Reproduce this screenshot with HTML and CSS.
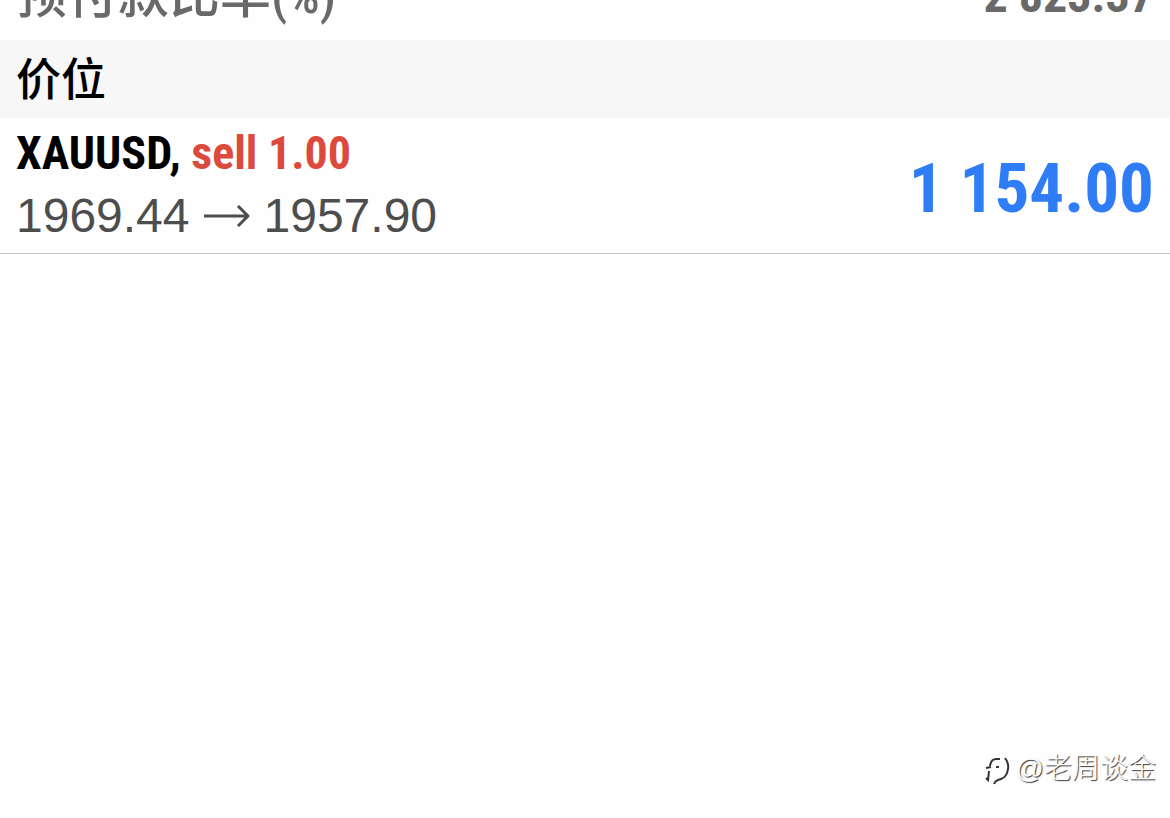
FILE: index.html
```
<!DOCTYPE html>
<html lang="zh-CN">
  <head>
    <meta charset="UTF-8" />
    <meta name="viewport" content="width=device-width, initial-scale=1.0" />
    <title>价位</title>
    <link rel="stylesheet" href="styles.css">
  </head>
  <body>
    <main class="trade">
      <div class="summary">
        <span class="summary-label">预付款比率(%)</span>
        <span class="summary-value">2 823.37</span>
      </div>
      <h2 class="section-title">价位</h2>
      <div class="position">
        <div class="position-info">
          <div class="position-name">XAUUSD, <span class="sell">sell 1.00</span></div>
          <div class="position-prices">
            <span>1969.44</span>
            <svg class="arrow" viewBox="0 0 46 22" fill="none" stroke="currentColor" stroke-width="3" stroke-linejoin="round" aria-hidden="true">
              <path d="M0 11H44M34 1L44 11L34 21" />
            </svg>
            <span>1957.90</span>
          </div>
        </div>
        <div class="profit">1 154.00</div>
      </div>
    </main>
    <footer class="watermark">
      <svg class="watermark-logo" viewBox="0 0 26 34" fill="none" aria-hidden="true">
        <path d="M6 14Q7 7 12 7H16M12 15H15M2 16L7 15M5 19L4 28L2 26M21 6Q25 11 24 17Q23 25 17 27L14 28Q11 29 10 32" />
      </svg>
      <span>@老周谈金</span>
    </footer>
  </body>
</html>
```

FILE: styles.css
```
body {
  display: flex;
  flex-direction: column;
  min-height: 100vh;
  margin: 0;
  background-color: #fefefe;
  color: #000;
  font-family: "Liberation Sans", "Noto Sans CJK SC", Arial, sans-serif;
}

/* last line of the account summary, scrolled under the top edge */
.summary {
  display: flex;
  justify-content: space-between;
  align-items: flex-end;
  height: 40px;
  padding: 0 16px;
  overflow: hidden;
  color: #696969;
  line-height: 88px;
}

.summary-label,
.summary-value,
.position-name,
.profit {
  font-family: "Roboto Condensed", "Noto Sans CJK SC", sans-serif;
  font-weight: bold;
}

.summary-label {
  font-size: 51px;
  font-weight: 500;
}

.summary-value {
  font-size: 48px;
}

.section-title {
  margin: 0;
  padding: 4px 16px 0;
  background-color: #f7f7f7;
  font-size: 45px;
  font-weight: 500;
  line-height: 74px;
}

.position {
  display: flex;
  justify-content: space-between;
  align-items: center;
  padding: 4px 16px 6px;
  border-bottom: 1px solid #c8c8c8;
}

.position-name {
  font-size: 46px;
  line-height: 62px;
}

.sell {
  color: #dc4a3d;
}

.position-prices {
  display: flex;
  align-items: center;
  gap: 14px;
  color: #4d4d4d;
  font-size: 48px;
  line-height: 63px;
}

.arrow {
  width: 46px;
  height: 22px;
}

.profit {
  padding-top: 8px;
  color: #2f7df6;
  font-size: 69px;
  line-height: 80px;
}

.watermark {
  display: flex;
  justify-content: flex-end;
  align-items: center;
  gap: 6px;
  margin-top: auto;
  padding: 0 14px 29px;
  color: #fff;
  font-size: 28px;
  font-weight: 300;
  line-height: 40px;
  text-shadow: 1px 1px 1px #333;
}

.watermark-logo {
  width: 26px;
  height: 34px;
  stroke: #333;
  stroke-width: 2;
}
```
